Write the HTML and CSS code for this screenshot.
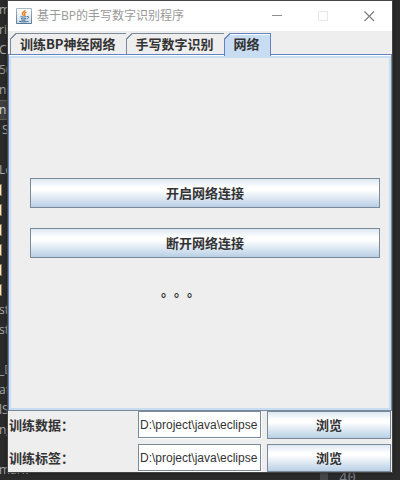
FILE: index.html
```html
<!DOCTYPE html>
<html lang="zh-CN">
<head>
  <meta charset="UTF-8">
  <meta name="viewport" content="width=device-width, initial-scale=1.0">
  <title>基于BP的手写数字识别程序</title>
  <link rel="stylesheet" href="styles.css">
</head>
<body>

  <!-- editor behind the window -->
  <div class="editor" aria-hidden="true">
    <div class="line">m</div>
    <div class="line">ris</div>
    <div class="line">Cs</div>
    <div class="line"><span class="num">50</span></div>
    <div class="line">ni</div>
    <div class="line current">ni</div>
    <div class="line">&nbsp;S</div>
    <div class="line"></div>
    <div class="line">Le</div>
    <div class="line"><i class="mark"></i></div>
    <div class="line"><i class="mark"></i></div>
    <div class="line"><i class="mark"></i></div>
    <div class="line"><i class="mark"></i></div>
    <div class="line"><i class="mark"></i></div>
    <div class="line"><i class="mark"></i></div>
    <div class="line">st</div>
    <div class="line">st</div>
    <div class="line"></div>
    <div class="line">_D</div>
    <div class="line">atl</div>
    <div class="line">lS</div>
    <div class="line">ng</div>
    <div class="line"></div>
    <div class="line">mark</div>
  </div>
  <div class="gutter" aria-hidden="true">40</div>

  <div class="window">
    <header class="titlebar">
      <svg class="java-icon" width="16" height="16" viewBox="0 0 16 16">
        <defs>
          <linearGradient id="tile" x1="0" y1="0" x2="0" y2="1">
            <stop offset="0" stop-color="#a9bccb"/>
            <stop offset="1" stop-color="#4f7896"/>
          </linearGradient>
          <linearGradient id="face" x1="0" y1="0" x2="0" y2="1">
            <stop offset="0" stop-color="#ffffff"/>
            <stop offset="1" stop-color="#d3dde5"/>
          </linearGradient>
        </defs>
        <rect width="16" height="16" rx="1" fill="url(#tile)"/>
        <rect x="1" y="1" width="14" height="14" fill="url(#face)"/>
        <path d="M8.8 2c.6 1.6-3.3 2.300-2.300 4.200.2.500.8.900 1 1.500M10.500 4.200C8.900 4.700 8 5.500 8.700 6.400c.4.600.2 1-.3 1.400" fill="none" stroke="#e8791c" stroke-width="1.400"/>
        <path d="M4.500 8.600c1.500.6 4.500.6 6 0M5 10.500c1.600.6 3.800.6 5.200 0M5.500 12c1.300.4 2.800.4 4 0M3 13.200c2.500.9 7 .9 9.500 0M11 8.500c2.300-.5 2.300 1.700-.2 2.300" fill="none" stroke="#356b98" stroke-width="1"/>
      </svg>
      <h1 class="title">基于BP的手写数字识别程序</h1>
      <button class="control" type="button" aria-label="最小化">
        <svg width="11" height="11" viewBox="0 0 11 11"><path d="M0 4.500h10" stroke="#8f8f8f"/></svg>
      </button>
      <button class="control" type="button" aria-label="最大化" disabled>
        <svg width="11" height="11" viewBox="0 0 11 11"><path d="M.5.500h9v9h-9z" fill="none" stroke="#e6e6e6"/></svg>
      </button>
      <button class="control" type="button" aria-label="关闭">
        <svg width="11" height="11" viewBox="0 0 11 11"><path d="M.5.500l9.500 9.500M10 .5L.5 10" stroke="#808080" stroke-width="1.200"/></svg>
      </button>
    </header>

    <div class="tabs" role="tablist">
      <button class="tab" type="button" role="tab">训练BP神经网络</button>
      <button class="tab" type="button" role="tab">手写数字识别</button>
      <button class="tab selected" type="button" role="tab" aria-selected="true">网络</button>
    </div>

    <main class="panel" role="tabpanel">
      <button class="btn" type="button">开启网络连接</button>
      <button class="btn" type="button">断开网络连接</button>
      <p class="status">。。。</p>
    </main>

    <form class="paths">
      <label for="train-data">训练数据：</label>
      <input class="path" id="train-data" type="text" value="D:\project\java\eclipse">
      <button class="btn" type="button">浏览</button>
      <label for="train-label">训练标签：</label>
      <input class="path" id="train-label" type="text" value="D:\project\java\eclipse">
      <button class="btn" type="button">浏览</button>
    </form>
  </div>

</body>
</html>
```
FILE: styles.css
```css
* {
  box-sizing: border-box;
}

body {
  position: relative;
  margin: 0;
  padding: 1px 8px 8px;
  background: #2b2b2b;
  color: #333;
  font: bold 13px/18px "Noto Sans CJK SC", sans-serif;
  overflow: hidden;
}

button,
input {
  margin: 0;
  color: inherit;
  font: inherit;
}

/* editor behind the window */
.editor {
  position: absolute;
  top: 0;
  left: 0;
  width: 50%;
  color: #aaa;
  font: 12px/20px "Open Sans", sans-serif;
  text-indent: -1px;
}

.line {
  height: 20px;
}

.line.current {
  border-top: 1px solid #62624f;
  border-bottom: 1px solid #62624f;
  background: #404040;
  color: #ddd;
  line-height: 18px;
}

.num {
  color: #9a9a88;
}

.line:has(.mark) {
  padding-top: 4px;
}

.mark {
  display: block;
  width: 2px;
  height: 12px;
  border: solid #94782e;
  border-width: 1px 1px 1px 0;
  background: #e4e4e4;
}

.gutter {
  position: absolute;
  right: 0;
  bottom: -8px;
  width: 80px;
  padding-left: 11px;
  border-left: 8px solid #454749;
  color: #788088;
  font: 14px/20px "Liberation Mono", monospace;
}

/* window */
.window {
  position: relative;
  background: #eee;
  box-shadow: 0 0 0 1px #444, 0 0 4px 1px rgba(0, 0, 0, 0.4);
}

.titlebar {
  display: flex;
  align-items: center;
  height: 30px;
  padding-left: 8px;
  background: #fff;
}

.title {
  flex: 1;
  margin: 0 0 0 5px;
  color: #999;
  font: 12px/18px "Open Sans", "Noto Sans CJK SC", sans-serif;
}

.control {
  display: flex;
  align-items: center;
  justify-content: center;
  width: 46px;
  height: 30px;
  padding: 0;
  border: 0;
  background: none;
}

/* tabs */
.tabs {
  display: flex;
  height: 24px;
  padding: 2px 2px 0;
  border-bottom: 1px solid #6382bf;
}

.tab {
  position: relative;
  height: 21px;
  margin-right: -1px;
  padding: 0 10px 0 9px;
  border: 1px solid #7a8a99;
  border-bottom: 0;
  background: #eee;
  line-height: 18px;
  white-space: nowrap;
}

.tab::before {
  content: "";
  position: absolute;
  top: -1px;
  left: -1px;
  width: 7px;
  height: 7px;
  background: linear-gradient(135deg, #eee 42%, #7a8a99 43%, #7a8a99 55%, transparent 56%);
}

.tab.selected {
  z-index: 1;
  height: 23px;
  padding: 0 10px 2px 9px;
  border-color: #6382bf;
  background: #c8ddf2;
  box-shadow: inset 0 1px #fff;
}

.tab.selected::before {
  background: linear-gradient(135deg, #eee 42%, #6382bf 43%, #6382bf 55%, transparent 56%);
}

.panel {
  display: flex;
  flex-direction: column;
  gap: 20px;
  min-height: 356px;
  padding: 123px 11px 0 21px;
  border: solid #7a8a99;
  border-width: 0 1px 1px;
  border-left-color: #6382bf;
  box-shadow: inset 0 1px #fff, inset 0 0 0 2px #c8ddf2, inset 0 3px #c8ddf2;
}

.btn {
  height: 30px;
  padding: 0;
  border: 1px solid #7a8a99;
  background: linear-gradient(#dde8f3, #fff 30%, #fff 40%, #b8cfe5);
}

.status {
  margin: 4px 0 0 131px;
  text-spacing-trim: space-all;
}

/* bottom grid */
.paths {
  display: grid;
  grid-template-columns: repeat(3, minmax(0, 1fr));
  grid-auto-rows: 28px;
  gap: 5px;
  align-items: center;
  padding: 0 1px;
}

.paths .btn {
  height: 28px;
}

.path {
  align-self: start;
  width: calc(100% - 1px);
  height: 27px;
  padding: 0 0 0 1px;
  border: 1px solid #7a8a99;
  border-radius: 0;
  background: #fff;
  box-shadow: 1px 1px #fff;
  font: 12px/18px "Liberation Sans", sans-serif;
}
```
